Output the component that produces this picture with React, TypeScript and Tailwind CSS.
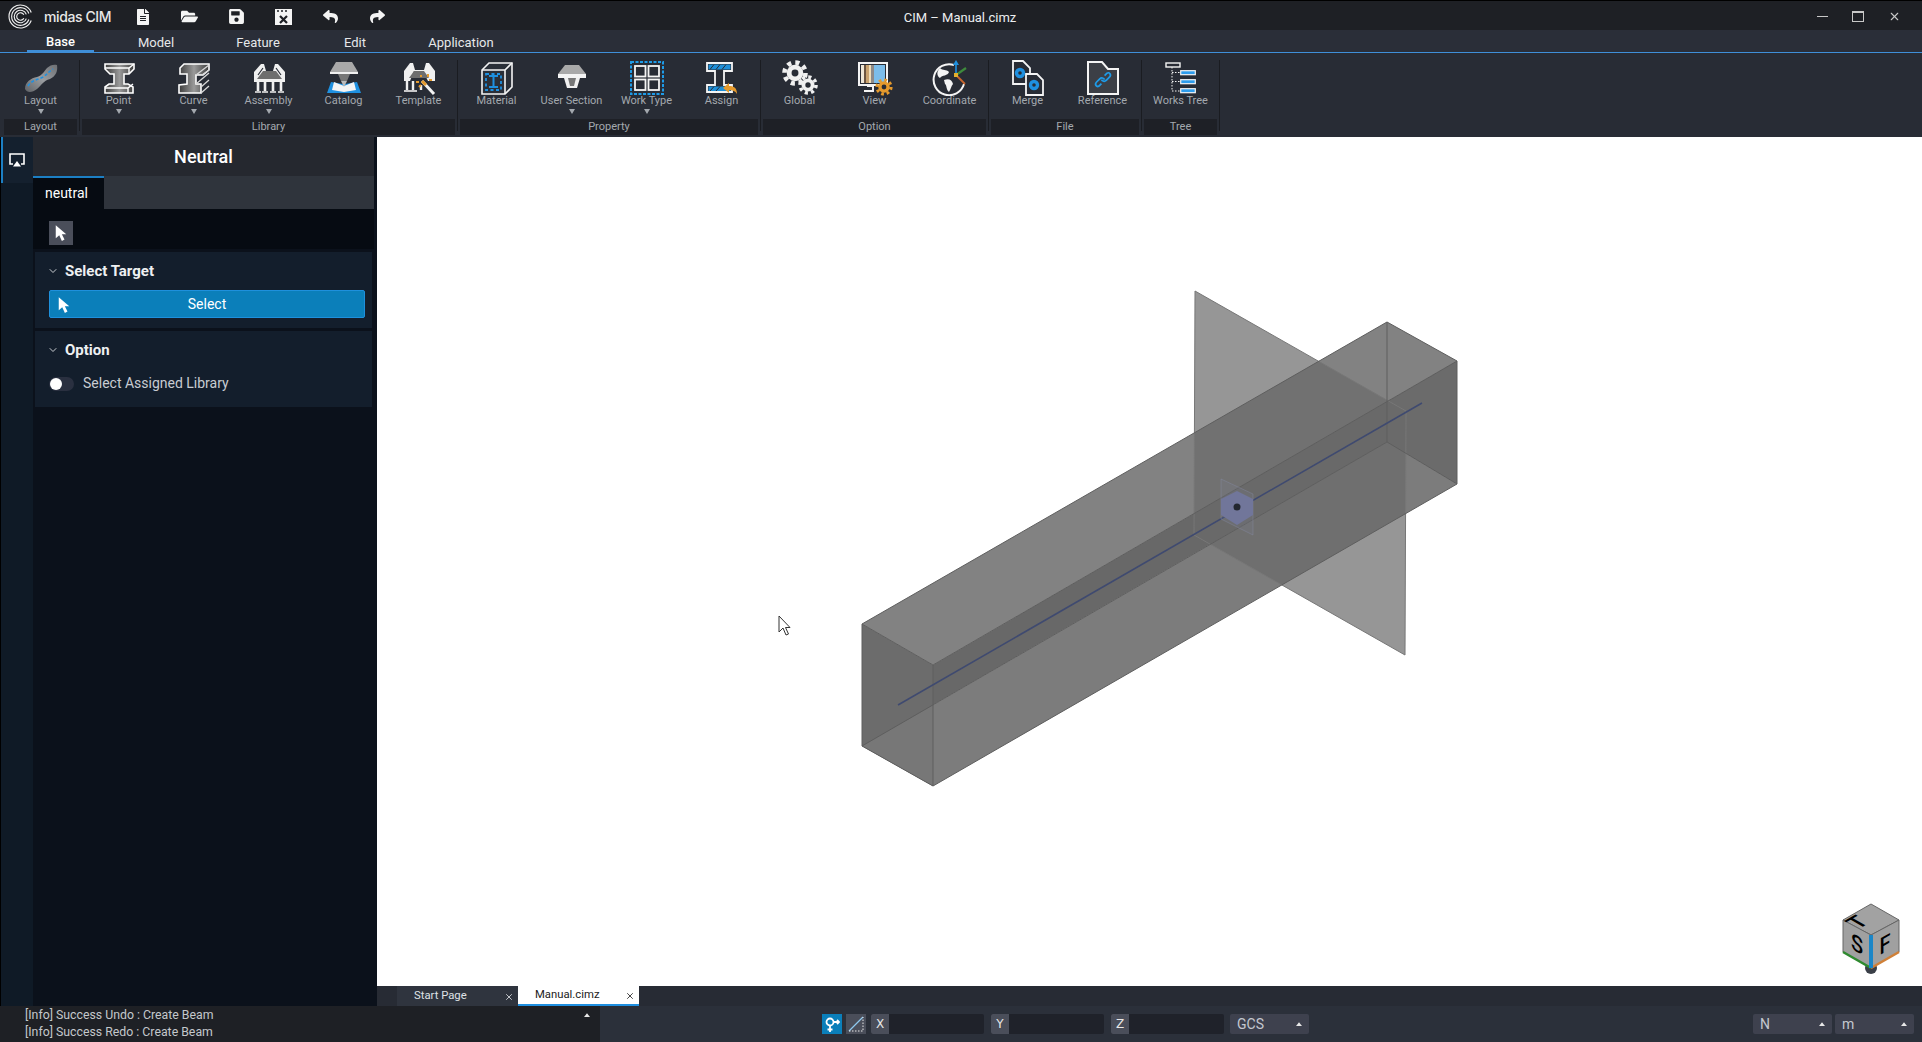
import type { ReactNode } from 'react';
import { ChevronDown, X } from 'lucide-react';
import { FaFileAlt, FaFolderOpen, FaReply, FaSave, FaShare } from 'react-icons/fa';

// ---- small shared drawings ----

function Arrow({ className = 'text-white' }: { className?: string }) {
  return (
    <svg width="14" height="18" viewBox="0 0 16 20" className={className}>
      <path d="M2 1V16L6 12.5L9 19L12 17.5L9 11.5H14Z" fill="currentColor" />
    </svg>
  );
}

function Caret() {
  return (
    <svg width="6" height="4" viewBox="0 0 8 5">
      <path d="M4 0L8 5H0Z" fill="#e8e8e8" />
    </svg>
  );
}

function Icon({ children }: { children: ReactNode }) {
  return (
    <svg width="36" height="36" viewBox="0 0 36 36" fill="none">
      {children}
    </svg>
  );
}

function Gear({ x, y, r, color = '#f0f0f0', hole = '#282c35' }: { x: number; y: number; r: number; color?: string; hole?: string }) {
  const teeth = 2 * Math.PI * (r - 1);
  return (
    <g>
      <circle cx={x} cy={y} r={r - 1} stroke={color} strokeWidth={r * 0.4} strokeDasharray={`${teeth / 16} ${teeth / 16}`} />
      <circle cx={x} cy={y} r={r * 0.72} fill={color} />
      <circle cx={x} cy={y} r={r * 0.3} fill={hole} />
    </g>
  );
}

// ---- ribbon icons ----

const LayoutIcon = () => (
  <Icon>
    <defs>
      <linearGradient id="roadA" x1="0" x2="1" y1="1" y2="0">
        <stop offset="0" stopColor="#5f6266" />
        <stop offset="0.5" stopColor="#9a9da0" />
        <stop offset="1" stopColor="#6c6f73" />
      </linearGradient>
    </defs>
    <path d="M2 29C2 22 8 18 14 17C20 15 21 11 24 8C27 5 31 4 34 5C35 11 33 16 27 19C20 21 19 25 14 29C9 33 4 33 2 29Z" fill="url(#roadA)" />
    <path d="M5 26C8 21 13 20 18 18C23 16 25 12 30 9" stroke="#1e90e0" strokeWidth="1.6" strokeDasharray="3 2" />
  </Icon>
);

const PointIcon = () => (
  <Icon>
    <defs>
      <linearGradient id="webA" x1="0" x2="1" y1="0" y2="0">
        <stop offset="0" stopColor="#3c3c3c" />
        <stop offset="0.5" stopColor="#9a9a9a" />
        <stop offset="1" stopColor="#3c3c3c" />
      </linearGradient>
    </defs>
    <path d="M4 4H33V9L28 14H23V24H27L32 27V33H4V27L8 24H13V14H9L4 9Z" fill="url(#webA)" stroke="#fff" strokeWidth="1.6" />
    <path d="M4 8L28 8L33 4M28 8V14M4 28H27L32 24M27 28V33" stroke="#fff" strokeWidth="1.4" />
  </Icon>
);

const CurveIcon = () => (
  <Icon>
    <path d="M4 8L8 4H33V10L27 15H20V24H25V33H3V25L11 24V14H4Z" fill="url(#webA)" stroke="#fff" strokeWidth="1.6" />
    <path d="M20 15L33 5M20 24L33 13M25 27L33 20M25 33L33 26M26 15L33 10" stroke="#d8d8d8" strokeWidth="1.3" />
  </Icon>
);

const AssemblyIcon = () => (
  <Icon>
    <path d="M3 22V12L10 4H13L15 11H22L24 4H27L34 12V22Z" fill="#f0f0f0" />
    <path d="M6 19L12 11H25L31 19Z" fill="#6e6e6e" />
    <path d="M7 15L12 8M30 15L25 8" stroke="#282c35" strokeWidth="1.2" />
    <path d="M7 22V31M14 22V31M22 22V31M30 22V31" stroke="#f0f0f0" strokeWidth="2.6" />
    <path d="M4 32H10M11 32H17M19 32H25M27 32H33" stroke="#f0f0f0" strokeWidth="1.6" />
  </Icon>
);

const CatalogIcon = () => (
  <Icon>
    <path d="M10 2H26L32 12H4Z" fill="#a9a9a9" />
    <path d="M4 12H32V14H4Z" fill="#f0f0f0" />
    <path d="M12 14H24L21 21H15Z" fill="#777" />
    <path d="M1 33L5 22L17 24H19L31 22L35 33Z" fill="#1e90e0" />
    <path d="M6 30L8 22L18 26L28 22L30 30L18 32Z" fill="#f4f4f4" />
    <path d="M15 21H21L18 27Z" fill="#bbb" />
  </Icon>
);

const TemplateIcon = () => (
  <Icon>
    <path d="M3 21V11L9 3H12L14 10H23L25 3H28L34 11V21H27L22 11H13L9 21Z" fill="#f0f0f0" />
    <path d="M8 18L13 11H23L28 18Z" fill="#6e6e6e" />
    <path d="M6 21V30M12 21V30M20 25V30" stroke="#f0f0f0" strokeWidth="2.4" />
    <path d="M3 31H16" stroke="#f0f0f0" strokeWidth="1.6" />
    <path d="M21 21L33 34" stroke="#f4f4f4" strokeWidth="3" />
    <path d="M21 21L25 25" stroke="#e59a2c" strokeWidth="3" />
    <path d="M20 15V17M27 14V17M15 22H18M18 27L20 25M28 20H31" stroke="#e59a2c" strokeWidth="2" />
  </Icon>
);

const MaterialIcon = () => (
  <Icon>
    <path d="M3 10L10 3H33V27L26 34H3Z" fill="#2a2f38" stroke="#f4f4f4" strokeWidth="1.6" />
    <path d="M3 10H26V34M26 10L33 3" stroke="#f4f4f4" strokeWidth="1.6" />
    <path d="M7 14H22V30H7Z" stroke="#1e90e0" strokeWidth="1.8" strokeDasharray="3 2.5" />
    <path d="M10 16H19M14.5 16V27M10 27H19" stroke="#1e90e0" strokeWidth="2" />
  </Icon>
);

const UserSectionIcon = () => (
  <Icon>
    <path d="M11 5H25L32 14V17H4V14Z" fill="#a9a9a9" />
    <path d="M4 14H32V18H4Z" fill="#f4f4f4" />
    <path d="M10 18H26L23 28H13Z" fill="#f0f0f0" />
    <path d="M14 18H22L20 26H16Z" fill="#777" />
  </Icon>
);

const WorkTypeIcon = () => (
  <Icon>
    <rect x="2" y="2" width="32" height="32" stroke="#1e9be8" strokeWidth="2" strokeDasharray="3 1.5" />
    <rect x="6" y="6" width="10.5" height="10.5" stroke="#f4f4f4" strokeWidth="1.8" />
    <rect x="19.5" y="6" width="10.5" height="10.5" stroke="#f4f4f4" strokeWidth="1.8" />
    <rect x="6" y="19.5" width="10.5" height="10.5" stroke="#f4f4f4" strokeWidth="1.8" />
    <rect x="19.5" y="19.5" width="10.5" height="10.5" stroke="#f4f4f4" strokeWidth="1.8" />
  </Icon>
);

const AssignIcon = () => (
  <Icon>
    <path d="M3 3H28V11H20V25H28V32H3V25H11V11H3Z" fill="#282c35" stroke="#f4f4f4" strokeWidth="1.8" />
    <rect x="4.5" y="4.5" width="22" height="5" fill="#1e8fd8" />
    <rect x="4.5" y="26.5" width="22" height="4.5" fill="#1e8fd8" />
    <path d="M6 9.5L10 4.5M12 9.5L16 4.5M18 9.5L22 4.5M6 31L10 26.5M12 31L16 26.5" stroke="#282c35" />
    <path d="M19 28L25 23V26C30 26 33 28 33 34C31 31 29 30 25 30V33Z" fill="#e59a2c" />
  </Icon>
);

const GlobalIcon = () => (
  <Icon>
    <Gear x={13} y={13} r={11.5} />
    <Gear x={26} y={25} r={9} />
  </Icon>
);

const ViewIcon = () => (
  <Icon>
    <path d="M2 3H30V25H2Z" fill="#282c35" stroke="#f4f4f4" strokeWidth="2" />
    <path d="M10 26H16V31H7" stroke="#f4f4f4" strokeWidth="2" />
    <rect x="4" y="5" width="3" height="18" fill="#efe6d6" />
    <rect x="7" y="5" width="2" height="18" fill="#6b5440" />
    <rect x="9" y="5" width="3" height="18" fill="#c9a26f" />
    <rect x="12" y="5" width="2" height="18" fill="#f0ddb8" />
    <rect x="14" y="5" width="3" height="18" fill="#8e8a88" />
    <rect x="17" y="5" width="11" height="18" fill="#7cbdea" />
    <Gear x={27} y={27} r={8} color="#e59a2c" hole="#282c35" />
  </Icon>
);

const CoordinateIcon = () => (
  <Icon>
    <path d="M22 5A15.5 15.5 0 1 0 32 24" stroke="#f4f4f4" strokeWidth="2" />
    <path d="M8 8C11 11 14 9 17 12C16 16 10 15 8 18C5 16 4 12 8 8ZM12 20C17 18 20 20 21 24C19 26 19 29 17 32C14 30 15 25 13 24Z" fill="#f4f4f4" />
    <path d="M24 15V3" stroke="#1e90e0" strokeWidth="1.6" />
    <path d="M24 0L27 5H21Z" fill="#1e90e0" />
    <path d="M24 15L34 8" stroke="#3e8a3c" strokeWidth="2.2" />
    <path d="M24 15L33 24" stroke="#c8642c" strokeWidth="1.8" />
    <rect x="22" y="13" width="4" height="4" fill="#e5b02c" />
  </Icon>
);

const MergeIcon = () => (
  <Icon>
    <path d="M3 1H13L20 8V24H3Z" fill="#282c35" stroke="#f4f4f4" strokeWidth="1.8" />
    <path d="M16 14H27L33 20V35H16Z" fill="#282c35" stroke="#f4f4f4" strokeWidth="1.8" />
    <circle cx="10" cy="13" r="3.5" stroke="#1e90e0" strokeWidth="3.4" />
    <circle cx="24" cy="25" r="3.5" stroke="#1e90e0" strokeWidth="3.4" />
  </Icon>
);

const ReferenceIcon = () => (
  <Icon>
    <path d="M3 2H17L23 9H33V34H3Z" fill="#3c3f46" stroke="#f4f4f4" strokeWidth="2" />
    <g transform="translate(3.6 4.4) scale(0.8)">
      <path d="M16 24L13 27C10 29 7 25 10 22L14 18C16 16 19 17 20 19M20 14L23 11C26 9 29 13 26 16L22 20C20 22 17 21 16 19" stroke="#1e9be8" strokeWidth="2.2" />
    </g>
  </Icon>
);

const WorksTreeIcon = () => (
  <Icon>
    <rect x="3" y="3" width="14" height="4" stroke="#f4f4f4" strokeWidth="1.4" />
    <path d="M9 7V31H17M9 21.5H17M9 12.5H17" stroke="#f4f4f4" strokeDasharray="1.5 1.5" />
    <rect x="17.7" y="10.7" width="14.6" height="4" fill="#2d9cec" stroke="#f4f4f4" strokeWidth="1.2" />
    <rect x="17.7" y="19.7" width="14.6" height="4" fill="#2d9cec" stroke="#f4f4f4" strokeWidth="1.2" />
    <rect x="17.7" y="28.7" width="14.6" height="4" fill="#2d9cec" stroke="#f4f4f4" strokeWidth="1.2" />
  </Icon>
);

type RibbonItem = { label: string; icon: ReactNode; caret?: boolean };

const groups: { title: string; width: string; items: RibbonItem[] }[] = [
  { title: 'Layout', width: 'w-[75px]', items: [{ label: 'Layout', icon: <LayoutIcon />, caret: true }] },
  {
    title: 'Library',
    width: 'w-[375px]',
    items: [
      { label: 'Point', icon: <PointIcon />, caret: true },
      { label: 'Curve', icon: <CurveIcon />, caret: true },
      { label: 'Assembly', icon: <AssemblyIcon />, caret: true },
      { label: 'Catalog', icon: <CatalogIcon /> },
      { label: 'Template', icon: <TemplateIcon /> },
    ],
  },
  {
    title: 'Property',
    width: 'w-[300px]',
    items: [
      { label: 'Material', icon: <MaterialIcon /> },
      { label: 'User Section', icon: <UserSectionIcon />, caret: true },
      { label: 'Work Type', icon: <WorkTypeIcon />, caret: true },
      { label: 'Assign', icon: <AssignIcon /> },
    ],
  },
  {
    title: 'Option',
    width: 'w-[225px]',
    items: [
      { label: 'Global', icon: <GlobalIcon /> },
      { label: 'View', icon: <ViewIcon /> },
      { label: 'Coordinate', icon: <CoordinateIcon /> },
    ],
  },
  {
    title: 'File',
    width: 'w-[150px]',
    items: [
      { label: 'Merge', icon: <MergeIcon /> },
      { label: 'Reference', icon: <ReferenceIcon /> },
    ],
  },
  { title: 'Tree', width: 'w-[75px]', items: [{ label: 'Works Tree', icon: <WorksTreeIcon /> }] },
];

const tabs = [
  { label: 'Base', width: 'w-[67px]' },
  { label: 'Model', width: 'w-[124px]' },
  { label: 'Feature', width: 'w-[80px]' },
  { label: 'Edit', width: 'w-[114px]' },
  { label: 'Application', width: 'w-[98px]' },
];

function TitleBar() {
  return (
    <div className="relative flex h-[30px] shrink-0 items-center border-t border-black bg-[#1e2025] pt-[2px] text-white">
      <svg width="25" height="25" viewBox="0 0 24 24" fill="none" className="ml-[8px]" stroke="#f0f0f0" strokeWidth="1.1">
        <path d="M22.3 8.2A11 11 0 1 0 22.3 15.8" />
        <path d="M20 9.1A8.5 8.5 0 1 0 20 14.9" />
        <path d="M17.6 10A6 6 0 1 0 17.6 14" />
        <path d="M15.2 10.4A3.6 3.6 0 1 0 15.2 13.6" />
      </svg>
      <span className="ml-[11px] w-[75px] whitespace-nowrap font-[Inter,sans-serif] text-[14px] font-medium tracking-[-0.4px] text-[#e8e8e8]">midas CIM</span>
      <div className="flex items-center text-[#f4f4f4]">
        <span className="flex w-[47px] justify-center"><FaFileAlt size={16} /></span>
        <span className="flex w-[47px] justify-center"><FaFolderOpen size={17} /></span>
        <span className="flex w-[47px] justify-center"><FaSave size={17} /></span>
        <span className="flex w-[47px] justify-center">
          <svg width="17" height="18" viewBox="0 0 17 18">
            <path d="M0 1H17V17H0Z" fill="#f4f4f4" />
            <path d="M2 3H4M6 3H8M10 3H12" stroke="#1e2025" strokeWidth="1.4" />
            <path d="M5 8L12 15M12 8L5 15" stroke="#1e2025" strokeWidth="2.2" />
          </svg>
        </span>
        <span className="flex w-[47px] justify-center"><FaReply size={15} /></span>
        <span className="flex w-[47px] justify-center"><FaShare size={15} /></span>
      </div>
      <span className="absolute left-[860px] top-[9px] w-[200px] text-center text-[13px] leading-[16px] text-[#eceef0]">CIM – Manual.cimz</span>
      <div className="ml-auto flex items-center pr-[21px] text-[#c8c8c8]">
        <span className="h-px w-[11px] bg-[#c8c8c8]" />
        <span className="ml-[24px] h-[11px] w-[12px] border border-t-2 border-[#c8c8c8]" />
        <X className="ml-[24px]" size={13} />
      </div>
    </div>
  );
}

function Tabs() {
  return (
    <div className="flex h-[23px] shrink-0 border-b border-[#3f8fd8] bg-[#2a2e38] pl-[27px] text-[13px] text-[#e6e8ea]">
      {tabs.map((t, i) => (
        <div key={t.label} className={`${t.width} flex items-center justify-center pt-[3px] ${i === 0 ? 'border-b-2 border-[#3f8fd8] font-medium text-white' : ''}`}>
          {t.label}
        </div>
      ))}
    </div>
  );
}

function Ribbon() {
  return (
    <div className="flex h-[84px] shrink-0 bg-[#282c35] pl-[3px]">
      {groups.map((g) => (
        <div key={g.title} className="flex">
          <div className={`${g.width} flex flex-col`}>
            <div className="flex h-[66px]">
              {g.items.map((item) => (
                <div key={item.label} className="flex w-[75px] flex-col items-center pt-[7px]">
                  <div className="flex h-[35px] items-center justify-center">{item.icon}</div>
                  <span className="whitespace-nowrap text-[11px] leading-[12px] text-[#a3a8ae]">{item.label}</span>
                  {item.caret && (
                    <svg width="6" height="5" viewBox="0 0 6 5" className="mt-[2px]">
                      <path d="M0 0H6L3 5Z" fill="#a3a8ae" />
                    </svg>
                  )}
                </div>
              ))}
            </div>
            <div className="mx-px flex h-[16px] items-center justify-center bg-[#1e2026] pt-px text-[11px] text-[#a3a8ae]">{g.title}</div>
          </div>
          <div className="ml-px mr-px mt-[7px] h-[71px] w-px bg-[#1a1c21]" />
        </div>
      ))}
    </div>
  );
}

function Section({ title, children }: { title: string; children: ReactNode }) {
  return (
    <div className="mx-[2px] mt-[3px] flex h-[76px] flex-col bg-[#131e2c] pl-[14px] pr-[7px]">
      <div className="flex h-[38px] items-center text-white">
        <ChevronDown size={12} className="-ml-[2px] text-[#c8ccd0]" />
        <span className="ml-[6px] text-[15px] font-bold text-[#eef0f2]">{title}</span>
      </div>
      {children}
    </div>
  );
}

function Panel() {
  return (
    <div className="flex w-[377px] shrink-0 border-l border-black bg-[#0b111b]">
      <div className="w-[32px] shrink-0 bg-[#0f1a26]">
        <div className="flex h-[46px] items-center justify-center border-l-2 border-[#1c7fc4] bg-[#14202e] pr-[2px]">
          <svg width="16" height="14" viewBox="0 0 16 14" fill="none">
            <path d="M4 11H1V1H15V11H12" stroke="#fff" strokeWidth="1.6" />
            <path d="M8 8L12 13.5H4Z" fill="#fff" />
          </svg>
        </div>
      </div>
      <div className="flex flex-1 flex-col pr-[3px]">
        <div className="flex h-[39px] items-center justify-center bg-[#25282f] text-[18px] font-medium text-white">Neutral</div>
        <div className="flex h-[33px] bg-[#2f343c]">
          <div className="flex w-[71px] items-center border-t-2 border-[#1c7fc4] bg-[#060b12] pl-[12px] text-[14px] text-white">neutral</div>
        </div>
        <div className="flex h-[40px] items-start bg-[#060b12] pl-[16px] pt-[12px]">
          <span className="flex h-[24px] w-[24px] items-center justify-center bg-[#4a4e5a]">
            <Arrow />
          </span>
        </div>
        <Section title="Select Target">
          <button className="relative flex h-[28px] items-center justify-center rounded-[2px] border border-[#1e90dc] bg-[#0b7fba] text-[14px] text-white">
            <span className="absolute left-[7px] top-[5px]"><Arrow /></span>
            Select
          </button>
        </Section>
        <Section title="Option">
          <div className="mt-[4px] flex items-center">
            <span className="relative h-[14px] w-[25px] rounded-full bg-[#2a3040]">
              <span className="absolute left-px top-[1px] h-[12px] w-[12px] rounded-full bg-white" />
            </span>
            <span className="ml-[9px] text-[14px] text-[#c8ccd2]">Select Assigned Library</span>
          </div>
        </Section>
      </div>
    </div>
  );
}

function Viewport() {
  return (
    <div className="min-h-0 flex-1 bg-white">
      <svg className="block h-full w-full" viewBox="377 137 1545 849">
        {/* beam */}
        <polygon points="862,624 933,665 1457,361 1387,322" fill="#828282" />
        <polygon points="933,665 1457,361 1457,484 1387,442 862,746" fill="#686868" />
        <polygon points="862,746 933,786 1457,484 1387,442" fill="#7c7c7c" />
        <polygon points="862,624 933,665 933,786 862,746" fill="#6c6c6c" />
        <polygon points="862,746 933,786 933,705" fill="#777777" />
        <polygon points="1387,402 1457,361 1457,484 1387,442" fill="#6b6b6b" />
        {/* section plane */}
        <polygon points="1195,291 1406,411 1405,655 1194,535" fill="#6a6a6a" fillOpacity="0.7" stroke="#777777" />
        <g stroke="#5e5e5e" strokeWidth="1" fill="none">
          <polygon points="862,624 1387,322 1457,361 1457,484 933,786 862,746" />
          <path d="M862,624 933,665 1457,361M933,665V786M862,746 1387,442 1457,484M1387,322V442" />
        </g>
        {/* axis line and point marker */}
        <path d="M898,705 1422,403" stroke="#3f4a70" strokeWidth="1.6" />
        <polygon points="1221,479 1253,494 1253,535 1221,519" fill="#8088b0" fillOpacity="0.12" stroke="#8a90b0" strokeOpacity="0.35" />
        <polygon points="1237,491 1253,499 1253,515 1237,525 1221,515 1221,499" fill="#71769a" />
        <circle cx="1237" cy="507" r="3.5" fill="#23272f" />
        {/* mouse cursor */}
        <path d="M779,616V632L783,628L786,635L788.5,634L785.5,627.5H790Z" fill="#fff" stroke="#333" />
        {/* view cube */}
        <circle cx="1871" cy="968" r="6" fill="#3a3f48" />
        <polygon points="1871,904 1899,920 1871,935 1843,920" fill="#a2a2a2" stroke="#666" />
        <polygon points="1843,920 1871,935 1871,968 1843,952" fill="#a0a0a0" stroke="#666" />
        <polygon points="1899,920 1871,935 1871,968 1899,952" fill="#a0a0a0" stroke="#666" />
        <path d="M1843,952 1871,968" stroke="#2f8a2f" strokeWidth="2.5" />
        <path d="M1871,968 1899,952" stroke="#d08038" strokeWidth="2.5" />
        <path d="M1871,935V968" stroke="#1a86c8" strokeWidth="4" />
        <g fill="#000" fontFamily="Roboto, sans-serif" fontSize="23" fontWeight="500" textAnchor="middle">
          <text transform="matrix(.87 -.5 .87 .5 1864 926)">T</text>
          <text transform="matrix(.87 .5 0 1 1857 952)">S</text>
          <text transform="matrix(.87 -.5 0 1 1885 952)">F</text>
        </g>
      </svg>
    </div>
  );
}

function DocTabs() {
  return (
    <div className="flex h-[20px] shrink-0 bg-[#272b34] pl-[20px] text-[11.3px]">
      <div className="flex w-[121px] items-center justify-between bg-[#2f343e] pl-[17px] pr-[4px] pt-px text-[#dfe2e6]">
        Start Page
        <X size={10} />
      </div>
      <div className="flex w-[121px] items-center justify-between border-b-2 border-[#1f8fe0] bg-white pl-[17px] pr-[4px] pt-px text-[#222]">
        Manual.cimz
        <X size={10} />
      </div>
    </div>
  );
}

function CoordField({ label }: { label: string }) {
  return (
    <div className="flex h-[20px] w-[113px] overflow-hidden rounded-[2px] bg-[#1f222a]">
      <span className="flex w-[18px] items-center justify-center bg-[#4a4e5a] font-[DejaVu_Sans,sans-serif] text-[12px] text-[#e8e8e8]">{label}</span>
    </div>
  );
}

function UnitSelect({ label, width }: { label: string; width: string }) {
  return (
    <div className={`${width} flex h-[20px] items-center justify-between rounded-[2px] bg-[#3e414e] pl-[7px] pr-[7px] text-[14px] text-[#c4c8d0]`}>
      {label}
      <Caret />
    </div>
  );
}

function StatusBar() {
  return (
    <div className="flex h-[36px] shrink-0 bg-[#2b303a]">
      <div className="relative flex w-[600px] flex-col justify-center bg-[#1e2025] pl-[25px] text-[12.3px] leading-[17px] text-[#c4c8cc]">
        <span>[Info] Success Undo : Create Beam</span>
        <span>[Info] Success Redo : Create Beam</span>
        <span className="absolute left-[584px] top-[7px] flex"><Caret /></span>
      </div>
      <div className="flex flex-1 items-center pl-[222px] pr-[8px]">
        <span className="flex h-[20px] w-[20px] items-center justify-center bg-[#0b7fba]">
          <svg width="16" height="18" viewBox="0 0 16 18" fill="none" stroke="#fff" strokeWidth="1.8">
            <circle cx="6" cy="7" r="3.5" />
            <path d="M6 10.5V17M3.5 14.5H8.5M9.5 7H15M13 5L15 7L13 9" />
          </svg>
        </span>
        <span className="ml-[4px] flex h-[20px] w-[20px] items-center justify-center bg-[#4a4e5a]">
          <svg width="16" height="16" viewBox="0 0 16 16" fill="none">
            <path d="M1 15L15 1" stroke="#8fc8ee" strokeWidth="1.3" />
            <path d="M1 15H15V1" stroke="#e8e8e8" strokeDasharray="1.5 1.5" />
          </svg>
        </span>
        <div className="ml-[5px] flex gap-[7px]">
          <CoordField label="X" />
          <CoordField label="Y" />
          <CoordField label="Z" />
        </div>
        <div className="ml-[6px]"><UnitSelect label="GCS" width="w-[79px]" /></div>
        <div className="ml-auto flex gap-[3px]">
          <UnitSelect label="N" width="w-[79px]" />
          <UnitSelect label="m" width="w-[79px]" />
        </div>
      </div>
    </div>
  );
}

export default function App() {
  return (
    <div className="flex h-screen w-full flex-col overflow-hidden bg-[#0b111b] font-[Roboto,sans-serif]">
      <TitleBar />
      <Tabs />
      <Ribbon />
      <div className="flex min-h-0 flex-1">
        <Panel />
        <div className="flex min-w-0 flex-1 flex-col">
          <Viewport />
          <DocTabs />
        </div>
      </div>
      <StatusBar />
    </div>
  );
}
